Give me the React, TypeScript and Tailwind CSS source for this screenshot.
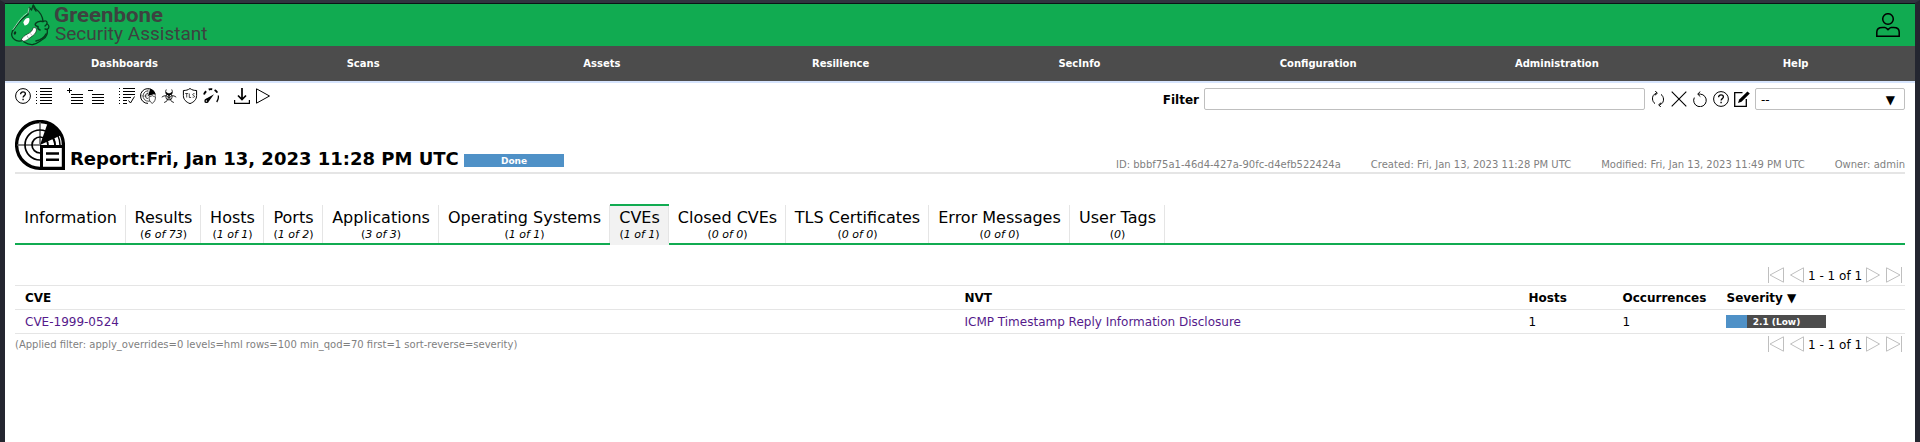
import React from "react";

type IconProps = { children: React.ReactNode; className?: string };

const Icon = ({ children, className = "" }: IconProps) => (
  <svg
    viewBox="0 0 16 16"
    className={"block h-4 w-4 shrink-0 " + className}
    fill="none"
    stroke="currentColor"
    strokeWidth="1"
  >
    {children}
  </svg>
);

const HelpIcon = () => (
  <Icon>
    <circle cx="8" cy="8" r="7.4" />
    <path d="M5.6 6.3C5.6 4.6 6.7 3.9 8 3.9s2.4.8 2.4 2.1c0 1.6-2.3 1.7-2.3 3.5" strokeWidth="1.3" />
    <path d="M8.1 10.7v1.5" strokeWidth="1.4" />
  </Icon>
);

const ListIcon = () => (
  <Icon>
    <path d="M4 .5h12M4 3.5h12M4 6.5h12M4 9.5h12M4 12.5h12M4 15.5h12" />
    <path d="M0 3.5h1M0 6.5h1M0 9.5h1M0 12.5h1M0 15.5h1" />
  </Icon>
);

const AddListIcon = () => (
  <Icon>
    <path d="M0 2.5h5M2.5 0v5M4 6.5h12M4 9.5h12M4 12.5h12M4 15.5h12" />
  </Icon>
);

const RemoveListIcon = () => (
  <Icon>
    <path d="M0 2.5h5M4 6.5h12M4 9.5h12M4 12.5h12M4 15.5h12" />
  </Icon>
);

const ResultIcon = () => (
  <Icon>
    <path d="M4 .5h12M4 3.5h12M4 6.5h12M4 9.5h8M4 12.5h4M4 15.5h4" />
    <path d="M0 .5h1M0 3.5h1M0 6.5h1M0 9.5h1M0 12.5h1M0 15.5h1" />
    <path d="M9.5 12.5l2 2.5 4-6.5" />
  </Icon>
);

const RadarIcon = () => (
  <Icon>
    <path d="M15.3 7.5A7.4 7.4 0 1 0 8 15.4" />
    <path d="M11 12.4A5.2 5.2 0 1 1 8 2.8M8 10.6A2.6 2.6 0 1 1 8 5.4" strokeWidth=".7" />
    <path d="M.5 8h7M8 .5v7" strokeWidth=".4" />
    <path d="M8 8l2.2-7.3A8 8 0 0 1 15.5 5.8z" fill="currentColor" stroke="none" />
    <path d="M9 8.7c1.7 0 2.3-.5 3.2-1.2 1 .7 1.5 1.2 3.3 1.2 0 3.3-1 5.3-3.3 6.7-2.3-1.4-3.2-3.4-3.2-6.7z" fill="white" strokeWidth=".7" />
  </Icon>
);

const BiohazardIcon = () => (
  <Icon>
    <circle cx="8" cy="8.8" r="3.2" strokeWidth=".8" />
    <path d="M5.3 1.5C3.8 4.5 5 6.5 8 7c3-.5 4.2-2.5 2.7-5.5M.8 9.2C3.5 7 6.5 7.5 7.2 9.6c.2 2.3-1.5 3.9-4 4.9M15.2 9.2C12.5 7 9.5 7.5 8.8 9.6c-.2 2.3 1.5 3.9 4 4.9" strokeWidth=".9" />
    <path d="M5 4.5C6 6 7 6.6 8 6.8c1-.2 2-.8 3-2.3" strokeWidth="1.4" />
    <path d="M8 7v3" strokeWidth="1.3" />
  </Icon>
);

const TlsIcon = () => (
  <Icon>
    <path d="M8 .5c2 1.5 4 2 6.6 2v5c0 4-2.5 6.5-6.6 8.1C3.9 14 1.4 11.5 1.4 7.5v-5C4 2.5 6 2 8 .5z" />
    <path d="M3.2 5.5h3M4.7 5.5v4M7.3 5.5v4h1.8M12.6 5.7c-2-.5-2.5 1.4-1 1.8 1.7.5 1 2.2-1 1.7" strokeWidth=".7" />
  </Icon>
);

const GaugeIcon = () => (
  <Icon>
    <path d="M1 6.5C1.5 5 2.2 4 3.2 3.2M5.7 1.5c1.3-.5 2.3-.5 3.5-.3M11.6 2c1.3.7 2.1 1.5 2.7 2.7" strokeWidth="1.9" />
    <path d="M15.3 7.5c.4 2.5-.1 4.5-1.6 6.5" strokeWidth="1.3" />
    <path d="M11 6.2L5.6 13.8 2.5 11z" fill="currentColor" stroke="none" />
    <circle cx="3.5" cy="12.9" r="2.2" fill="currentColor" stroke="none" />
    <circle cx="3.4" cy="13" r=".7" fill="white" stroke="none" />
  </Icon>
);

const DownloadIcon = () => (
  <Icon>
    <path d="M.6 12v3.4h14.8V12" strokeWidth="1.2" />
    <path d="M8 0v11M4 7.5l4 4 4-4" strokeWidth="1.7" />
  </Icon>
);

const PlayIcon = () => (
  <Icon>
    <path d="M1.5 .8v14.4L14.5 8z" />
  </Icon>
);

const RefreshIcon = () => (
  <Icon>
    <path d="M6.5 2.2C3.5 3 2.3 5.5 2.5 8c.2 2 1 3.500 2.500 4.600M9.500 13.800C12.500 13 13.700 10.500 13.500 8c-.2-2-1-3.500-2.500-4.600" strokeWidth="1" />
    <path d="M5.300 0l2 2.300-2.500 2M10.700 16l-2-2.300 2.500-2" strokeWidth="1" />
  </Icon>
);

const CloseIcon = () => (
  <Icon>
    <path d="M.7.7l14.600 14.600M15.300.7L.7 15.300" strokeWidth="1.100" />
  </Icon>
);

const ResetIcon = () => (
  <Icon>
    <path d="M6 3.100h2.300a6.300 6.300 0 1 1-6 3.500" strokeWidth="1" />
    <path d="M8.300.5L5.700 3.100l2.600 2.500" strokeWidth="1" />
  </Icon>
);

const EditIcon = () => (
  <Icon>
    <path d="M8.500 1.700H.7v13.600h11.600V8" strokeWidth="1.300" />
    <path d="M4 12l1.200-3.600L13.400.4l2.400 2.200-8.300 8.200z" fill="currentColor" stroke="none" />
  </Icon>
);

const ReportIcon = () => (
  <svg viewBox="0 0 50 50" className="block h-[50px] w-[50px] shrink-0" fill="none" stroke="black">
    <path d="M26 48.300A23.400 23.400 0 1 1 48.400 25v23.400H26" strokeWidth="3.300" />
    <path d="M25 2v22M2 25h24" stroke="#555" strokeWidth="1.500" />
    <path d="M25 40A15 15 0 1 1 40 25M25 33A8 8 0 1 1 33 25" strokeWidth="1.700" />
    <path d="M37 17q3 4 3 8M43 16q2 4 2 9" strokeWidth="1.500" />
    <path d="M25 25L32.500 3.500Q42 7 46.500 15z" fill="black" stroke="none" />
    <path d="M26.500 26.500h21.800v21.800H26.500z" fill="white" strokeWidth="3" />
    <path d="M31 33.500h13M31 39.700h13" strokeWidth="2.600" />
  </svg>
);

const UserIcon = () => (
  <svg viewBox="0 0 24 24" className="block h-6 w-6" fill="none" stroke="black" strokeWidth="1.500">
    <circle cx="12" cy="6" r="5.300" />
    <path d="M.8 23.200V19c0-3.300 2-4.600 5.500-4.600h2.500c1 0 1.700.8 3.200 2.200 1.500-1.400 2.200-2.200 3.200-2.200h2.500c3.500 0 5.500 1.300 5.500 4.600v4.200z" />
  </svg>
);

const Logo = () => (
  <svg viewBox="0 0 204 42" className="block h-[42px] w-[204px] overflow-visible" fill="none">
    <g stroke="#073d1e" strokeWidth="1.300" strokeLinejoin="round" strokeLinecap="round">
      <path d="M17 10.500L18.300 3.500 20.500 6 22.300.8 25 5.300C29 8 31.500 12 32 17.500c3-1.500 4.500 0 4 2.500 2.500 1 2.500 4 .3 5.500.5 4-1 7.500-4 9.500-4 2.500-6 5-10.500 5.500-4 .3-6.500-1-8.800-2.500L12 36c-2 1.500-6 1.500-8.500-.5C.8 33.500-.2 31 1.500 27 5 22.500 9 15 17 10.500z" />
      <path d="M15.500 9.500C10 13 6 20 2 25.500M18 4l-1 5" stroke="#bdf0cf" strokeWidth=".8" />
      <path d="M22.500 2c.3 2 1 3.500 2.500 5M32 17.500c-3-.8-6 .2-7.500 2-.8 1.500.5 2.800 2.500 3-.5 1.800.5 3 2 3.500M35 30c-2 4.500-5.500 6-10 7" strokeWidth="1.500" />
      <path d="M36 20l-2 2M36.300 25.500l-2.300-.5" />
    </g>
    <path d="M12.300 18.500c1-3.300 3.700-5.300 5.900-4.300 1 3-1 7-4.600 7.300z" fill="white" />
    <path d="M22 23.800c2-.6 3.500.2 3.500 2.200-.3 3-2.500 5-5.500 7-2.300 1.800-4.500 3.900-7.200 4.200l-2.600-1.200c1-2.700 3.800-4.900 6.600-6.200C20 28.300 21.500 26.700 22 23.800z" fill="white" stroke="#0b2f19" strokeWidth=".7" />
    <path d="M16 31.500l1.300 2.500M19.500 29.500l1.500 2" stroke="#777" strokeWidth=".5" />
    <ellipse cx="4" cy="29" rx="1.100" ry="1.700" transform="rotate(25 4 29)" fill="#0b2f19" />
    <text x="43" y="17.500" fill="#3d4240" fontFamily="Roboto, sans-serif" fontWeight="700" fontSize="19.500" textLength="109" lengthAdjust="spacingAndGlyphs">Greenbone</text>
    <text x="44" y="35.500" fill="#3d4240" fontFamily="Roboto, sans-serif" fontSize="18" textLength="152.500" lengthAdjust="spacingAndGlyphs">Security Assistant</text>
  </svg>
);

const FirstIcon = () => (
  <Icon>
    <path d="M.5 0v16M15.500 .8v14.400L2 8z" />
  </Icon>
);
const PrevIcon = () => (
  <Icon>
    <path d="M14.500 .8v14.400L1.500 8z" />
  </Icon>
);
const NextIcon = () => (
  <Icon>
    <path d="M1.500 .8v14.400L14.500 8z" />
  </Icon>
);
const LastIcon = () => (
  <Icon>
    <path d="M15.500 0v16M.5 .8v14.400L14 8z" />
  </Icon>
);

const Pagination = () => (
  <div className="flex h-4 items-center pr-[3px] text-[#bfbfbf]">
    <FirstIcon />
    <span className="ml-[5px]"><PrevIcon /></span>
    <span className="ml-[3px] w-[54px] whitespace-nowrap pt-px text-[12px] leading-4 text-black">1 - 1 of 1</span>
    <span className="ml-[3px]"><NextIcon /></span>
    <span className="ml-[5px]"><LastIcon /></span>
  </div>
);

const menu = ["Dashboards", "Scans", "Assets", "Resilience", "SecInfo", "Configuration", "Administration", "Help"];

type Tab = { label: string; count?: string; width: string; active?: boolean };

const tabs: Tab[] = [
  { label: "Information", width: "w-[111px]" },
  { label: "Results", count: "6 of 73", width: "w-[75px]" },
  { label: "Hosts", count: "1 of 1", width: "w-[63px]" },
  { label: "Ports", count: "1 of 2", width: "w-[59px]" },
  { label: "Applications", count: "3 of 3", width: "w-[116px]" },
  { label: "Operating Systems", count: "1 of 1", width: "w-[171px]" },
  { label: "CVEs", count: "1 of 1", width: "w-[59px]", active: true },
  { label: "Closed CVEs", count: "0 of 0", width: "w-[117px]" },
  { label: "TLS Certificates", count: "0 of 0", width: "w-[143px]" },
  { label: "Error Messages", count: "0 of 0", width: "w-[141px]" },
  { label: "User Tags", count: "0", width: "w-[95px]" },
];

const columns = "grid h-6 grid-cols-[939.5px_564px_94px_104px_1fr] items-center border-b border-[#e5e5e5] pl-[10px]";

export default function App() {
  return (
    <div className="h-[442px] w-[1920px] overflow-hidden border-x-[5px] border-t-[3px] border-x-[#242630] border-t-[#31343f] bg-white font-['DejaVu_Sans',sans-serif] text-[12px] text-black">
      <header className="flex h-[43px] items-center justify-between border-t border-[#0b1416] bg-[#11ab51] pl-[6px] pr-[15px]">
        <Logo />
        <UserIcon />
      </header>
      <nav className="grid h-[35px] grid-cols-8 items-center bg-[#4c4c4c] text-center text-[10px] font-bold text-white">
        {menu.map((m) => (
          <a key={m}>{m}</a>
        ))}
      </nav>
      <div className="h-[2px] bg-[#d6e4fd]" />
      <main className="px-[10px]">
        <div className="flex h-[37px] items-start justify-between pt-[5px]">
          <div className="flex gap-[15px]">
            <div className="flex gap-[5px]"><HelpIcon /><ListIcon /></div>
            <div className="flex gap-[5px]"><AddListIcon /><RemoveListIcon /></div>
            <div className="flex gap-[5px]"><ResultIcon /><RadarIcon /><BiohazardIcon /><TlsIcon /><GaugeIcon /></div>
            <div className="flex gap-[5px]"><DownloadIcon /><PlayIcon /></div>
          </div>
          <div className="flex h-[22px] items-center">
            <span className="mr-[5px] pt-[2px] font-bold">Filter</span>
            <div className="h-[22px] w-[441px] rounded-[2px] border border-[#bfbfbf] bg-white" />
            <div className="ml-[5px] mr-[5px] flex gap-[5px]"><RefreshIcon /><CloseIcon /><ResetIcon /><HelpIcon /><EditIcon /></div>
            <div className="flex h-[22px] w-[150px] items-center justify-between rounded-[2px] border border-[#bfbfbf] pl-[5px] pr-[9px] pt-[2px]">
              <span>--</span>
              <span>▼</span>
            </div>
          </div>
        </div>
        <div className="flex h-[54px] items-start justify-between border-b-2 border-[#e5e5e5]">
          <div className="flex items-end">
            <ReportIcon />
            <h1 className="mb-px ml-[5px] w-[389px] whitespace-nowrap text-[18px] font-bold leading-[20px]">Report:Fri, Jan 13, 2023 11:28 PM UTC</h1>
            <div className="mb-[3px] ml-[5px] h-[13px] w-[100px] bg-[#4f91c7] text-center text-[9px] font-bold leading-[14px] text-white">Done</div>
          </div>
          <div className="flex gap-[30px] whitespace-nowrap pt-[37px] text-[10px] leading-[15px] text-[#7f7f7f]">
            <span>ID: bbbf75a1-46d4-427a-90fc-d4efb522424a</span>
            <span>Created: Fri, Jan 13, 2023 11:28 PM UTC</span>
            <span>Modified: Fri, Jan 13, 2023 11:49 PM UTC</span>
            <span>Owner: admin</span>
          </div>
        </div>
        <div className="mt-[30px] flex h-[41px]">
          {tabs.map((t) => (
            <div
              key={t.label}
              className={
                "shrink-0 whitespace-nowrap border-b-2 text-center " +
                t.width +
                (t.active ? " border-b-[#f2f2f2] border-t-2 border-t-[#11ab51] bg-[#f2f2f2]" : " border-b-[#11ab51] pt-px")
              }
            >
              <div className={"border-r border-[#e5e5e5] pl-px " + (t.active ? "h-[37px] pt-[2px]" : "h-[38px] pt-[3px]")}>
                <div className="text-[16px] leading-[20px]">{t.label}</div>
                {t.count && <div className="text-[11px] leading-[13px]">(<i>{t.count}</i>)</div>}
              </div>
            </div>
          ))}
          <div className="flex-1 border-b-2 border-[#11ab51]" />
        </div>
        <section className="pt-[22px]">
          <div className="flex justify-end pb-[2px]"><Pagination /></div>
          <div className="h-px bg-[#e5e5e5]" />
          <div className={columns + " font-bold"}>
            <span>CVE</span><span>NVT</span><span>Hosts</span><span>Occurrences</span><span>Severity ▼</span>
          </div>
          <div className={columns}>
            <a className="text-[#551a8b]">CVE-1999-0524</a>
            <a className="text-[#551a8b]">ICMP Timestamp Reply Information Disclosure</a>
            <span>1</span>
            <span>1</span>
            <div className="-ml-[0.5px] h-[13px] w-[100px] bg-[linear-gradient(90deg,#4f91c7_21%,#4c4c4c_21%)] pl-px text-center text-[9px] font-bold leading-[14px] text-white">2.1 (Low)</div>
          </div>
          <div className="flex items-start justify-between pt-[2px]">
            <span className="pt-px text-[10px] leading-4 text-[#7f7f7f]">(Applied filter: apply_overrides=0 levels=hml rows=100 min_qod=70 first=1 sort-reverse=severity)</span>
            <Pagination />
          </div>
        </section>
      </main>
    </div>
  );
}
